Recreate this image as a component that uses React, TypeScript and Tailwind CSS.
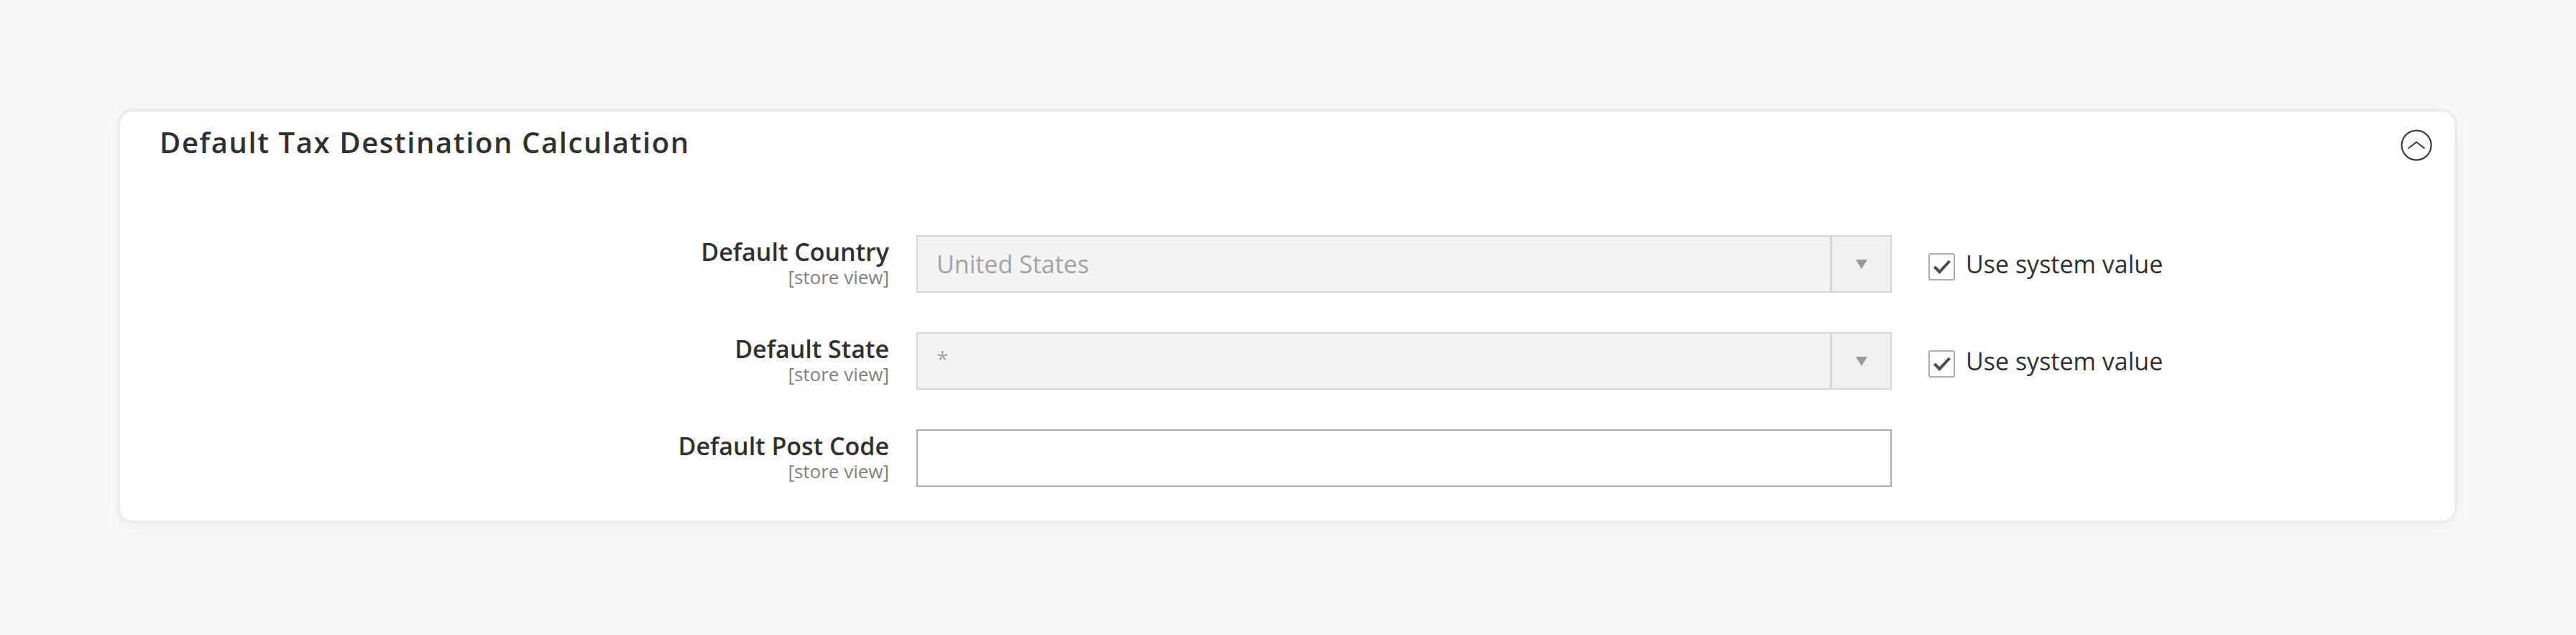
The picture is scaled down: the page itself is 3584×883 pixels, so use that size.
const rows = [
  { label: "Default Country", value: "United States", kind: "select" as const },
  { label: "Default State", value: "*", kind: "select" as const },
  { label: "Default Post Code", value: "", kind: "input" as const },
];

function CollapseIcon() {
  return (
    <svg width="44" height="44" viewBox="0 0 44 44" fill="none">
      <circle cx="22" cy="22" r="20.5" stroke="#303030" strokeWidth="2" />
      <path d="M10.5 26.5 L22 17.5 L33.5 26.5" stroke="#303030" strokeWidth="1.8" strokeLinejoin="round" />
    </svg>
  );
}

function SystemValueCheck() {
  return (
    <label className="ml-[51px] flex h-[80px] items-start gap-[15px]">
      <span className="mt-[25px] flex h-[38px] w-[37px] items-center justify-center rounded-[3px] border-2 border-[#adadad] bg-white">
        <svg width="26" height="22" viewBox="0 0 26 22" fill="none">
          <path d="M2.5 11 L9.5 18 L23.5 3" stroke="#514943" strokeWidth="4" />
        </svg>
      </span>
      <span className="mt-[17px] text-[34px] leading-[46px] text-[#303030]">Use system value</span>
    </label>
  );
}

function FieldRow({ label, value, kind }: { label: string; value: string; kind: "select" | "input" }) {
  return (
    <div className="flex items-start">
      <div className="w-[1070px] shrink-0 text-right">
        <div className="text-[34px] font-semibold leading-[46px] text-[#303030]">{label}</div>
        <div className="text-[26px] leading-[25px] text-[#808080]">[store view]</div>
      </div>
      {kind === "select" ? (
        <>
          <div className="ml-[38px] flex h-[80px] w-[1357px] shrink-0 border-2 border-[#d6d6d6] bg-[#f3f3f3]">
            <div className="flex flex-1 items-center pl-[26px] text-[34px] text-[#a3a3a3]">
              {value === "*" ? <span className="-mt-[8px] text-[30px]">*</span> : value}
            </div>
            <div className="flex w-[84px] items-center justify-center border-l-[3px] border-[#d6d6d6] bg-[#f0f0f0]">
              <svg width="16" height="13" viewBox="0 0 16 13">
                <path d="M0 0 H16 L8 13 Z" fill="#9d9895" />
              </svg>
            </div>
          </div>
          <SystemValueCheck />
        </>
      ) : (
        <div className="ml-[38px] h-[80px] w-[1357px] shrink-0 border-2 border-[#adadad] bg-white" />
      )}
    </div>
  );
}

export default function App() {
  return (
    <div className="min-h-[883px] bg-[#f8f8f8] pl-[167px] pt-[155px] font-['Open_Sans',sans-serif]">
      <section className="h-[569px] w-[3248px] rounded-[18px] bg-white shadow-[0_0_0_4px_#ececec,0_8px_24px_rgba(0,0,0,0.05)]">
        <div className="flex items-start justify-between pl-[55px] pr-[31px] pt-[23px]">
          <h2 className="text-[40px] font-semibold leading-[40px] tracking-[1.6px] text-[#303030]">Default Tax Destination Calculation</h2>
          <button type="button" className="mt-[2px]">
            <CollapseIcon />
          </button>
        </div>
        <div className="mt-[103px] flex flex-col gap-[55px]">
          {rows.map((row) => (
            <FieldRow key={row.label} {...row} />
          ))}
        </div>
      </section>
    </div>
  );
}
